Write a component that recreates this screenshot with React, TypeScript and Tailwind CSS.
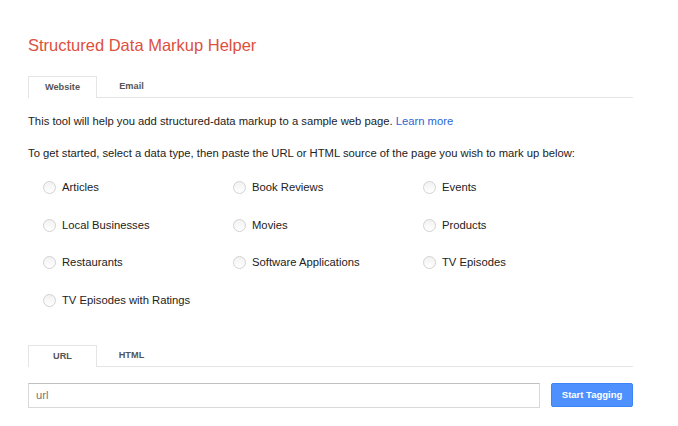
import React from "react";

const types = [
  "Articles",
  "Book Reviews",
  "Events",
  "Local Businesses",
  "Movies",
  "Products",
  "Restaurants",
  "Software Applications",
  "TV Episodes",
  "TV Episodes with Ratings",
];

function Tabs({ a, b }: { a: string; b: string }) {
  return (
    <div className="flex border-b border-[#e5e5e5] h-[22px]">
      <div className="w-[69px] h-[22px] border border-b-0 border-[#e5e5e5] bg-white flex items-center justify-center text-[9.2px] font-bold text-[#555] box-border">
        {a}
      </div>
      <div className="w-[69px] h-[21px] flex items-center justify-center text-[9.2px] font-bold text-[#555]">
        {b}
      </div>
    </div>
  );
}

export default function App() {
  return (
    <div className="w-[678px] h-[426px] bg-white font-['Liberation_Sans',Arial,sans-serif] text-[#222] pl-[28px] pt-[35px]">
      <div className="w-[605px]">
        <h1 className="text-[16.5px] leading-[20px] text-[#dc5040]">Structured Data Markup Helper</h1>
        <div className="mt-[21px]">
          <Tabs a="Website" b="Email" />
        </div>
        <p className="text-[11.25px] leading-[14px] mt-[16px]">
          This tool will help you add structured-data markup to a sample web page.{" "}
          <span className="text-[#2a66d4]">Learn more</span>
        </p>
        <p className="text-[11.25px] leading-[14px] mt-[18px]">
          To get started, select a data type, then paste the URL or HTML source of the page you wish to mark up below:
        </p>
        <div className="grid grid-cols-[190px_190px_190px] pl-[15px] mt-[9px]">
          {types.map((t) => (
            <div key={t} className="flex items-center h-[37.5px]">
              <span className="w-[13px] h-[13px] rounded-full border border-[#d2d2d2] bg-gradient-to-b from-[#f2f2f2] to-white box-border"></span>
              <span className="ml-[6px] text-[11.25px] text-[#222]">{t}</span>
            </div>
          ))}
        </div>
        <div className="mt-[26px]">
          <Tabs a="URL" b="HTML" />
        </div>
        <div className="flex mt-[16px] items-start">
          <div className="w-[513px] h-[25px] border border-[#d9d9d9] border-t-[#c0c0c0] bg-white flex items-center pl-[7px] text-[11.25px] text-[#777] box-border">
            url
          </div>
          <button className="ml-[11px] w-[82px] h-[24px] rounded-[2px] bg-[#4d90fe] border border-[#3d85f5] text-white text-[9.5px] font-bold flex items-center justify-center">
            Start Tagging
          </button>
        </div>
      </div>
    </div>
  );
}
